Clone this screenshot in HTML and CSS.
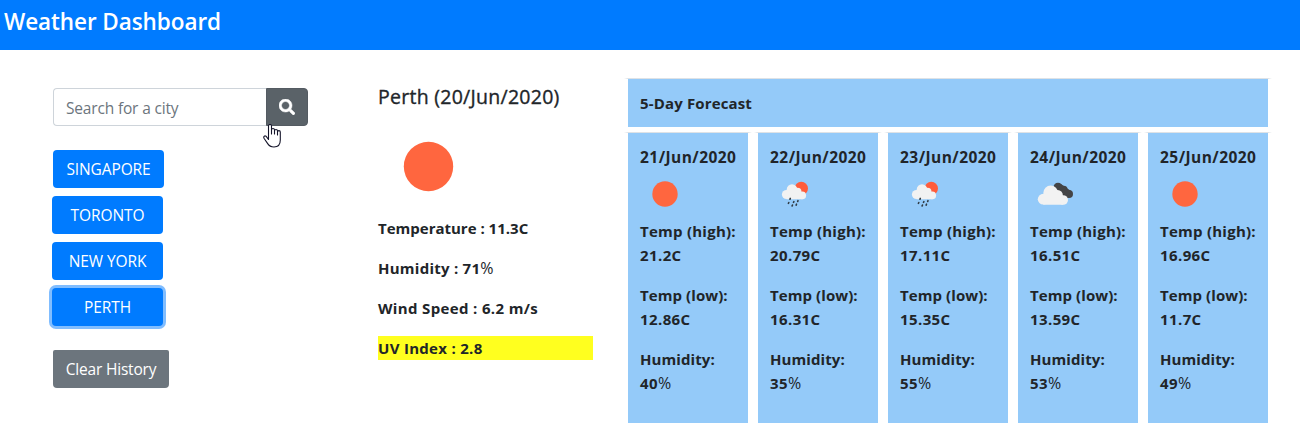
FILE: index.html
```html
<!DOCTYPE html>
<html lang="en">
<head>
<meta charset="utf-8">
<title>Weather Dashboard</title>
<link rel="stylesheet" href="styles.css">
</head>
<body>
<svg width="0" height="0" class="defs" aria-hidden="true">
  <symbol id="sun" viewBox="0 0 50 50"><circle cx="25" cy="25" r="12.7" fill="#ff663f"/></symbol>
  <symbol id="rain" viewBox="0 0 50 50">
    <circle cx="31.3" cy="19.4" r="6.7" fill="#ff5c3b"/>
    <g fill="#f2f2f2"><circle cx="16.500" cy="25.500" r="4.600"/><circle cx="22" cy="20.500" r="5.300"/><circle cx="27.500" cy="22.800" r="4"/><circle cx="32.300" cy="26.400" r="3.800"/><path d="M16.500 21h10l6 4v5.200h-16z"/></g>
    <path d="M20.300 29.400l-.3.800M23.900 32.600l-.4.800M28 31.700l-.3.700M18.800 33.500l-.4.800M22.500 36l-.4.900M26.500 35.200l-.4.900" stroke="#303b44" stroke-width="1.600" stroke-linecap="round"/>
  </symbol>
  <symbol id="clouds" viewBox="0 0 50 50">
    <g fill="#444446"><circle cx="28" cy="18.200" r="4.500"/><circle cx="33.600" cy="20.700" r="4"/><circle cx="39" cy="25" r="4"/><path d="M31 15l10 7-3 7h-5l-5-8z"/></g>
    <g fill="#f2f2f2"><circle cx="13.200" cy="30.200" r="5.400"/><circle cx="20.700" cy="24" r="7.400"/><circle cx="27.600" cy="26.200" r="5.300"/><circle cx="33.200" cy="31" r="4.800"/><path d="M13.200 25h14l6 4v6.700h-20z"/></g>
  </symbol>
</svg>
<header class="navbar"><h1 class="brand">Weather Dashboard</h1></header>
<main class="layout">
  <aside class="sidebar">
    <form class="search">
      <input class="search-input" type="text" placeholder="Search for a city">
      <button class="search-button" type="button" aria-label="Search">
        <svg width="16" height="16" viewBox="0 0 512 512"><path fill="#fff" stroke="#fff" stroke-width="16" d="M505 442.700L405.300 343c-4.500-4.500-10.600-7-17-7H372c27.600-35.300 44-79.700 44-128C416 93.100 322.900 0 208 0S0 93.100 0 208s93.100 208 208 208c48.300 0 92.700-16.400 128-44v16.300c0 6.400 2.500 12.500 7 17l99.700 99.700c9.400 9.400 24.600 9.400 33.900 0l28.300-28.300c9.400-9.400 9.400-24.600.1-34zM208 336c-70.700 0-128-57.200-128-128 0-70.700 57.200-128 128-128 70.700 0 128 57.200 128 128 0 70.700-57.200 128-128 128z"/></svg>
      </button>
      <svg class="pointer" width="18" height="24" viewBox="0 0 18 24"><path d="M5.500 15.500V2a1.500 1.500 0 0 1 3 0v8-4a1.500 1.500 0 0 1 3 0v4-3a1.500 1.500 0 0 1 3 0v4-3a1.400 1.400 0 0 1 2.800 0v8c0 4.500-2.500 7-6.300 7-3.300 0-5-1.200-6.500-3.600L1 14.200c-.8-1.500.5-2.800 2-2z" fill="#fff" stroke="#15152a" stroke-width="1.100" stroke-linejoin="round"/></svg>
    </form>
    <div class="history">
      <button class="city city-first">SINGAPORE</button>
      <button class="city">TORONTO</button>
      <button class="city">NEW YORK</button>
      <button class="city city-active">PERTH</button>
    </div>
    <button class="clear">Clear History</button>
  </aside>
  <section class="current">
    <h2 class="place">Perth (20/Jun/2020)</h2>
    <svg class="current-icon" viewBox="0 0 100 100"><circle cx="50.500" cy="49.500" r="24.700" fill="#ff663f"/></svg>
    <p>Temperature : 11.3C</p>
    <p class="humidity">Humidity : 71<span class="pct">%</span></p>
    <p class="wind">Wind Speed : 6.2 m/s</p>
    <p class="uv">UV Index : 2.8</p>
  </section>
  <section class="forecast">
    <div class="forecast-title">5-Day Forecast</div>
    <div class="days">
      <article class="day"><h3>21/Jun/2020</h3><svg class="icon"><use href="#sun"/></svg><p><span class="high">Temp (high):</span><br>21.2C</p><p><span class="low">Temp (low):</span><br>12.86C</p><p><span class="low">Humidity:</span><br>40<span class="pct">%</span></p></article>
      <article class="day"><h3>22/Jun/2020</h3><svg class="icon"><use href="#rain"/></svg><p><span class="high">Temp (high):</span><br>20.79C</p><p><span class="low">Temp (low):</span><br>16.31C</p><p><span class="low">Humidity:</span><br>35<span class="pct">%</span></p></article>
      <article class="day"><h3>23/Jun/2020</h3><svg class="icon"><use href="#rain"/></svg><p><span class="high">Temp (high):</span><br>17.11C</p><p><span class="low">Temp (low):</span><br>15.35C</p><p><span class="low">Humidity:</span><br>55<span class="pct">%</span></p></article>
      <article class="day"><h3>24/Jun/2020</h3><svg class="icon"><use href="#clouds"/></svg><p><span class="high">Temp (high):</span><br>16.51C</p><p><span class="low">Temp (low):</span><br>13.59C</p><p><span class="low">Humidity:</span><br>53<span class="pct">%</span></p></article>
      <article class="day"><h3>25/Jun/2020</h3><svg class="icon"><use href="#sun"/></svg><p><span class="high">Temp (high):</span><br>16.96C</p><p><span class="low">Temp (low):</span><br>11.7C</p><p><span class="low">Humidity:</span><br>49<span class="pct">%</span></p></article>
    </div>
  </section>
</main>
</body>
</html>
```
FILE: styles.css
```css
* { box-sizing: border-box; }
body { margin: 0; background: #fff; color: #212529; font: 400 15.5px/24px "Open Sans", "Noto Sans", sans-serif; overflow: hidden; }
h1, h2, h3, p { margin: 0; }
button, input { font: inherit; }
.defs { display: block; height: 0; }
.navbar { height: 50px; background: #007bff; padding: 7px 4px; }
.brand { color: #fff; font-size: 22.5px; line-height: 29px; font-weight: 600; white-space: nowrap; letter-spacing: -.08px; }
.layout { display: flex; }
.sidebar { width: 378px; padding: 38px 0 0 53px; }
.search { display: flex; width: 255px; height: 38px; position: relative; }
.search-input { flex: 1; min-width: 0; border: 1px solid #ced4da; border-right: 0; border-radius: 4px 0 0 4px; padding: 2px 12px 0; color: #495057; outline: none; letter-spacing: -.17px; }
.search-input::placeholder { color: #6c757d; opacity: 1; }
.search-button { width: 42px; border: 1px solid #545b62; background: #5a6268; border-radius: 0 4px 4px 0; padding: 0; display: flex; align-items: center; justify-content: center; }
.pointer { position: absolute; left: 210px; top: 36px; }
.history { display: flex; flex-direction: column; gap: 8px; margin: 24px 0 0 -1px; }
.city { width: 111px; height: 38px; border: 0; border-radius: 4px; background: #007bff; color: #fff; padding: 0 0 1px; white-space: nowrap; letter-spacing: -.1px; }
.city-first { margin-left: 1px; }
.city-active { box-shadow: 0 0 0 3px #80bdff; }
.clear { display: block; width: 116px; height: 38px; margin-top: 24px; border: 0; border-radius: 2px 2px 4px 4px; background: #6c757d; color: #fff; padding: 0 0 1px; white-space: nowrap; letter-spacing: -.2px; }
.current { width: 215px; padding-top: 35px; font-weight: 700; }
.place { font-size: 19.5px; font-weight: 400; line-height: 24px; white-space: nowrap; letter-spacing: .27px; -webkit-text-stroke: .35px #212529; }
.current-icon { display: block; width: 100px; height: 100px; margin: 8px 0 -1px; }
.current p { font-size: 15px; margin-bottom: 16px; white-space: nowrap; }
.current .humidity { letter-spacing: .25px; }
.current .wind { letter-spacing: .35px; }
.current .uv { background: #ffff1f; letter-spacing: .3px; }
.pct { font-weight: 500; font-size: 16px; line-height: 1; }
.forecast { width: 640px; margin: 28px 0 0 35px; font-weight: 700; font-size: 15px; }
.forecast-title, .day { position: relative; background: #94caf9; padding: 12px; }
.forecast-title { height: 49px; border-top: 1px solid #dee2e6; margin-bottom: 5px; letter-spacing: .15px; }
.forecast-title::before, .day::before { content: ""; position: absolute; height: 1px; left: -4px; right: -4px; top: -1px; background: linear-gradient(90deg, transparent, #dee2e6 4px, #dee2e6 calc(100% - 4px), transparent); }
.days { display: grid; grid-template-columns: repeat(5, 120px); gap: 10px; }
.day { height: 291px; border-top: 1px solid #dee2e6; white-space: nowrap; }
.day h3 { font: inherit; font-size: 15.5px; letter-spacing: .45px; }
.icon { display: block; width: 50px; height: 50px; }
.day p { margin-bottom: 16px; letter-spacing: .4px; }
.day .high { letter-spacing: .25px; }
.day .low { letter-spacing: .08px; }
```
